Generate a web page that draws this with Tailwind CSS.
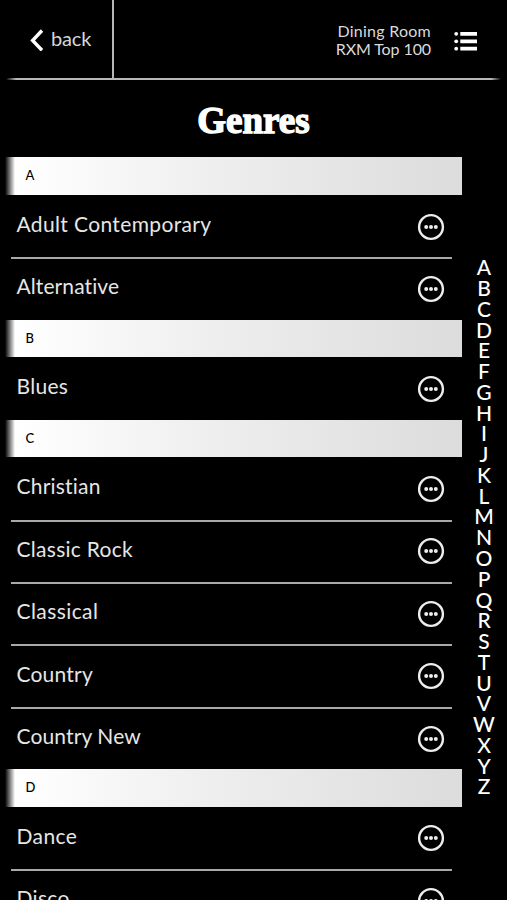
<!DOCTYPE html>
<html lang="en">
<head>
<meta charset="utf-8">
<title>Genres</title>
<script src="https://cdn.jsdelivr.net/npm/@tailwindcss/browser@4"></script>
</head>
<body class="bg-black">
<main class="relative flex h-[900px] w-[507px] flex-col overflow-hidden bg-black font-['Lato',sans-serif] text-[#e6e6e6]">
  <header class="flex h-[78px] shrink-0">
    <button class="flex w-[112px] items-center pl-[30px] pt-[1px]">
      <svg class="h-[22px] w-[14px] shrink-0" viewBox="0 0 14 22" fill="none" stroke="white" stroke-width="3.4"><path d="M12 1.5 2.6 11.5 12 21.3"/></svg>
      <span class="-mt-[3px] ml-[7px] text-[20px] leading-6 tracking-[-0.15px] text-[#d6d6d6]">back</span>
    </button>
    <div class="w-[2px] bg-[#b5b5b5]"></div>
    <div class="flex flex-1 items-center justify-end pt-[4px] pr-[30px]">
      <div class="-mt-[2px] mr-[23px] text-right text-[16px] leading-[18px] text-[#dadada]"><div class="tracking-[0.25px]">Dining Room</div><div class="tracking-[-0.1px]">RXM Top 100</div></div>
      <svg class="h-[20px] w-[23px]" viewBox="0 0 23 20" fill="white"><circle cx="2.2" cy="2.8" r="1.9"/><circle cx="2.2" cy="10.3" r="1.9"/><circle cx="2.2" cy="17.7" r="1.9"/><path d="M6.3.9H23v3.9H6.3zM6.3 8.4H23v3.8H6.3zM6.3 15.8H23v3.8H6.3z"/></svg>
    </div>
  </header>
  <div class="mx-[6px] h-[2px] shrink-0 bg-[linear-gradient(90deg,transparent,#b8b8b8_10px,#b8b8b8_485px,transparent)]"></div>
  <h1 class="flex h-[77.3px] shrink-0 items-center justify-center pt-[4px] font-['Liberation_Serif',serif] text-[37px] leading-[40px] font-bold text-white [-webkit-text-stroke:1.4px_white]">Genres</h1>
  <div class="flex min-h-0 flex-1">
    <div id="list" class="w-[462px] shrink-0 overflow-hidden"></div>
    <nav id="index" class="flex flex-1 flex-col items-center pt-[100px] pr-[1px] text-[21px] leading-[20.76px] font-medium text-white"></nav>
  </div>
</main>
<script>
const sections = [
  ['A', [['Adult Contemporary', 0.36], ['Alternative', 0.1]]],
  ['B', [['Blues', 0.3]]],
  ['C', [['Christian', 0.2], ['Classic Rock', 0.28], ['Classical', 0.42], ['Country', 0.2], ['Country New', 0.12]]],
  ['D', [['Dance', 0.4], ['Disco', 0.3]]]
];
const more = `<svg class="mt-[1px] h-[28px] w-[28px]" viewBox="0 0 28 28"><circle cx="14" cy="14" r="11.9" fill="none" stroke="#ededed" stroke-width="2.4"/><g fill="#ededed"><circle cx="9.2" cy="14" r="2"/><circle cx="14" cy="14" r="2"/><circle cx="18.8" cy="14" r="2"/></g></svg>`;
document.getElementById('list').innerHTML = sections.map(([letter, genres]) => `
  <section>
    <h2 class="ml-[5px] h-[37.6px] bg-[linear-gradient(90deg,#000,#fff_10px,#fdfdfd_35px,#eeeeee_210px,#dcdcdc)] pl-[20.5px] text-[13px] leading-[36px] font-medium text-black">${letter}</h2>
    ${genres.map(([name, spacing], i) => `<div class="relative flex h-[62.4px] items-center justify-between pl-[16.5px] pr-[17.5px]">
      ${i ? '<div class="absolute top-0 right-[10px] left-[11px] h-[2px] bg-[#a9a9a9]"></div>' : ''}
      <span class="-mt-[4px] text-[21px] leading-7" style="letter-spacing:${spacing}px">${name}</span>${more}
    </div>`).join('')}
  </section>`).join('');
document.getElementById('index').innerHTML = [...'ABCDEFGHIJKLMNOPQRSTUVWXYZ'].map(c => `<a>${c}</a>`).join('');
</script>
</body>
</html>
